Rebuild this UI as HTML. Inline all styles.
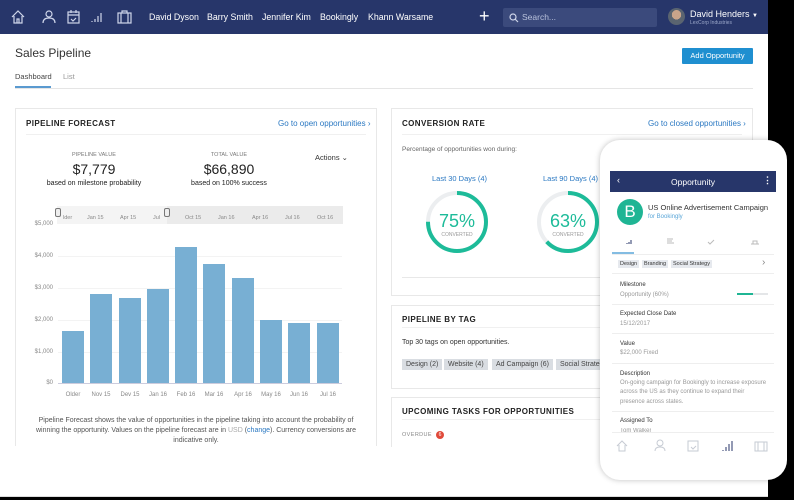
<!DOCTYPE html>
<html><head><style>
*{margin:0;padding:0;box-sizing:border-box}
body{width:794px;height:500px;background:#000;font-family:"Liberation Sans",sans-serif;position:relative;overflow:hidden;color:#333}
.abs{position:absolute}
#app{left:0;top:0;width:768px;height:497px;background:#fff;overflow:hidden}
#nav{left:0;top:0;width:768px;height:34px;background:#27366a}
.nv{color:#fff;font-size:8.8px;top:12px}
.card{border:1px solid #e8e8e8;background:#fff}
.h{font-size:8px;font-weight:bold;letter-spacing:.4px;color:#222}
.lnk{color:#2a78c2;font-size:8px}
.yl{font-size:6px;color:#888;left:26px;width:27px;text-align:right}
.bar{background:#78afd3;width:22px}
.xl{font-size:6px;color:#888;top:392px;width:30px;text-align:center}
.tag{background:#d9dde2;color:#444;font-size:7px;padding:2px 4px;top:359px}
.pl{font-size:6px;color:#333;left:620px}
.pv{font-size:6px;color:#999;left:620px}
.sep{height:1px;background:#eee;left:612px;width:162px}
</style></head><body>
<div id="app" class="abs">
<div id="nav" class="abs">
<svg class="abs" style="left:10px;top:8px" width="130" height="18" fill="none" stroke="#cfd6ea" stroke-width="1.2">
<path d="M2 9 L8 3 L14 9 M4 8 V15 H12 V8 M7 15 V11 H9 V15"/>
<circle cx="39" cy="6" r="3"/><path d="M33 15 Q33 10 39 10 Q45 10 45 15"/>
<rect x="58" y="4" width="11" height="11"/><path d="M58 7 H69 M61 2 V5 M66 2 V5 M61 11 L63 13 L66 10"/>
<path d="M82 14 V13 M85 14 V11 M88 14 V8 M91 14 V5"/>
<rect x="108" y="5" width="13" height="10"/><path d="M111 5 V15 M118 5 V15 M112 5 V3 H117 V5"/>
</svg>
<div class="abs nv" style="left:149px">David Dyson</div>
<div class="abs nv" style="left:207px">Barry Smith</div>
<div class="abs nv" style="left:262px">Jennifer Kim</div>
<div class="abs nv" style="left:320px">Bookingly</div>
<div class="abs nv" style="left:368px">Khann Warsame</div>
<div class="abs" style="left:479px;top:6px;color:#fff;font-size:18px;font-weight:300">+</div>
<div class="abs" style="left:503px;top:8px;width:154px;height:19px;background:#3b4a7c;border-radius:2px"></div>
<svg class="abs" style="left:509px;top:13px" width="10" height="10" fill="none" stroke="#cfd6ea" stroke-width="1.2"><circle cx="4" cy="4" r="3"/><path d="M6 6 L9 9"/></svg>
<div class="abs" style="left:522px;top:12px;color:#b9c2dc;font-size:8.5px">Search...</div>
<div class="abs" style="left:668px;top:8px;width:17px;height:17px;border-radius:50%;background:radial-gradient(circle at 50% 40%,#c9a48a 0 35%,#5a6470 36%)"></div>
<div class="abs" style="left:690px;top:9px;color:#fff;font-size:9px">David Henders</div>
<div class="abs" style="left:690px;top:20px;color:#9aa6c8;font-size:5px">LexCorp Industries</div>
<div class="abs" style="left:752px;top:13px;color:#fff;font-size:6px">▼</div>
</div>
<div class="abs" style="left:15px;top:46px;font-size:12px;color:#333">Sales Pipeline</div>
<div class="abs" style="left:682px;top:48px;width:71px;height:16px;background:#1f8fd0;color:#fff;font-size:7.5px;text-align:center;line-height:16px;border-radius:1px">Add Opportunity</div>
<div class="abs" style="left:15px;top:72px;font-size:7.5px;color:#444">Dashboard</div>
<div class="abs" style="left:63px;top:72px;font-size:7.5px;color:#999">List</div>
<div class="abs" style="left:15px;top:88px;width:738px;height:1px;background:#e5e5e5"></div>
<div class="abs" style="left:15px;top:86px;width:36px;height:2px;background:#5a9ad0"></div>

<div class="abs card" style="left:15px;top:108px;width:362px;height:345px"></div>
<div class="abs h" style="left:26px;top:119px">PIPELINE FORECAST</div>
<div class="abs lnk" style="left:278px;top:119px">Go to open opportunities ›</div>
<div class="abs" style="left:26px;top:134px;width:340px;height:1px;background:#f0f0f0"></div>
<div class="abs" style="left:44px;top:152px;width:100px;text-align:center;font-size:5.5px;color:#777">PIPELINE VALUE</div>
<div class="abs" style="left:44px;top:161px;width:100px;text-align:center;font-size:14px;color:#222">$7,779</div>
<div class="abs" style="left:34px;top:180px;width:120px;text-align:center;font-size:7px;color:#222">based on milestone probability</div>
<div class="abs" style="left:179px;top:152px;width:100px;text-align:center;font-size:5.5px;color:#777">TOTAL VALUE</div>
<div class="abs" style="left:179px;top:161px;width:100px;text-align:center;font-size:14px;color:#222">$66,890</div>
<div class="abs" style="left:169px;top:180px;width:120px;text-align:center;font-size:7px;color:#222">based on 100% success</div>
<div class="abs" style="left:315px;top:153px;font-size:7.5px;color:#333">Actions ⌄</div>
<div class="abs" style="left:57px;top:206px;width:286px;height:18px;background:#ebebeb"></div>
<div class="abs" style="left:57px;top:206px;width:110px;height:18px;background:#f4f4f4"></div>
<div class="abs" style="left:55px;top:208px;width:6px;height:9px;border:1px solid #777;background:#eee;border-radius:2px"></div>
<div class="abs" style="left:164px;top:208px;width:6px;height:9px;border:1px solid #777;background:#eee;border-radius:2px"></div>
<div class="abs" style="left:63px;top:215px;font-size:5.5px;color:#888">lder</div>
<div class="abs" style="left:87px;top:215px;font-size:5.5px;color:#888">Jan 15</div>
<div class="abs" style="left:120px;top:215px;font-size:5.5px;color:#888">Apr 15</div>
<div class="abs" style="left:153px;top:215px;font-size:5.5px;color:#888">Jul</div>
<div class="abs" style="left:185px;top:215px;font-size:5.5px;color:#888">Oct 15</div>
<div class="abs" style="left:218px;top:215px;font-size:5.5px;color:#888">Jan 16</div>
<div class="abs" style="left:252px;top:215px;font-size:5.5px;color:#888">Apr 16</div>
<div class="abs" style="left:285px;top:215px;font-size:5.5px;color:#888">Jul 16</div>
<div class="abs" style="left:317px;top:215px;font-size:5.5px;color:#888">Oct 16</div>
<div class="abs yl" style="top:221px">$5,000</div>
<div class="abs yl" style="top:253px">$4,000</div>
<div class="abs yl" style="top:285px">$3,000</div>
<div class="abs yl" style="top:317px">$2,000</div>
<div class="abs yl" style="top:349px">$1,000</div>
<div class="abs yl" style="top:380px">$0</div>
<div class="abs" style="left:58px;top:256px;width:284px;height:1px;background:#f3f3f3"></div>
<div class="abs" style="left:58px;top:288px;width:284px;height:1px;background:#f3f3f3"></div>
<div class="abs" style="left:58px;top:320px;width:284px;height:1px;background:#f3f3f3"></div>
<div class="abs" style="left:58px;top:352px;width:284px;height:1px;background:#f3f3f3"></div>
<div class="abs" style="left:58px;top:383px;width:284px;height:1px;background:#ccd"></div>
<div class="abs bar" style="left:62px;top:331px;height:52px"></div>
<div class="abs bar" style="left:90px;top:294px;height:89px"></div>
<div class="abs bar" style="left:119px;top:298px;height:85px"></div>
<div class="abs bar" style="left:147px;top:289px;height:94px"></div>
<div class="abs bar" style="left:175px;top:247px;height:136px"></div>
<div class="abs bar" style="left:203px;top:264px;height:119px"></div>
<div class="abs bar" style="left:232px;top:278px;height:105px"></div>
<div class="abs bar" style="left:260px;top:320px;height:63px"></div>
<div class="abs bar" style="left:288px;top:323px;height:60px"></div>
<div class="abs bar" style="left:317px;top:323px;height:60px"></div>
<div class="abs xl" style="left:58px">Older</div><div class="abs xl" style="left:86px">Nov 15</div><div class="abs xl" style="left:115px">Dev 15</div><div class="abs xl" style="left:143px">Jan 16</div><div class="abs xl" style="left:171px">Feb 16</div><div class="abs xl" style="left:199px">Mar 16</div><div class="abs xl" style="left:228px">Apr 16</div><div class="abs xl" style="left:256px">May 16</div><div class="abs xl" style="left:284px">Jun 16</div><div class="abs xl" style="left:313px">Jul 16</div>
<div class="abs" style="left:36px;top:416px;width:320px;text-align:center;font-size:7px;line-height:10px;color:#555">Pipeline Forecast shows the value of opportunities in the pipeline taking into account the probability of winning the opportunity. Values on the pipeline forecast are in <span style="color:#aaa">USD</span> (<span style="color:#2a78c2">change</span>). Currency conversions are indicative only.</div>
<div class="abs" style="left:15px;top:446px;width:362px;height:60px;background:#fff"></div>

<div class="abs card" style="left:391px;top:108px;width:362px;height:188px"></div>
<div class="abs h" style="left:402px;top:119px">CONVERSION RATE</div>
<div class="abs lnk" style="left:648px;top:119px">Go to closed opportunities ›</div>
<div class="abs" style="left:402px;top:134px;width:340px;height:1px;background:#f0f0f0"></div>
<div class="abs" style="left:402px;top:146px;font-size:6.5px;color:#666">Percentage of opportunities won during:</div>
<div class="abs lnk" style="left:432px;top:174px;font-size:7.5px">Last 30 Days (4)</div>
<div class="abs lnk" style="left:543px;top:174px;font-size:7.5px">Last 90 Days (4)</div>
<svg class="abs" style="left:420px;top:188px" width="200" height="70">
<circle cx="37" cy="34" r="29" fill="none" stroke="#eceef0" stroke-width="4"/>
<circle cx="37" cy="34" r="29" fill="none" stroke="#1dbb99" stroke-width="4" stroke-dasharray="136.7 182.2" transform="rotate(-90 37 34)"/>
<circle cx="148" cy="34" r="29" fill="none" stroke="#eceef0" stroke-width="4"/>
<circle cx="148" cy="34" r="29" fill="none" stroke="#1dbb99" stroke-width="4" stroke-dasharray="114.8 182.2" transform="rotate(-90 148 34)"/>
<text x="37" y="39" font-size="18" fill="#1dbb99" text-anchor="middle" font-family="Liberation Sans">75%</text>
<text x="37" y="48" font-size="5" fill="#999" text-anchor="middle" font-family="Liberation Sans">CONVERTED</text>
<text x="148" y="39" font-size="18" fill="#1dbb99" text-anchor="middle" font-family="Liberation Sans">63%</text>
<text x="148" y="48" font-size="5" fill="#999" text-anchor="middle" font-family="Liberation Sans">CONVERTED</text>
</svg>
<div class="abs" style="left:402px;top:277px;width:340px;height:1px;background:#e8e8e8"></div>

<div class="abs card" style="left:391px;top:305px;width:362px;height:84px"></div>
<div class="abs h" style="left:402px;top:315px">PIPELINE BY TAG</div>
<div class="abs" style="left:402px;top:327px;width:340px;height:1px;background:#f0f0f0"></div>
<div class="abs" style="left:402px;top:339px;font-size:7px;color:#333">Top 30 tags on open opportunities.</div>
<div class="abs tag" style="left:402px">Design (2)</div>
<div class="abs tag" style="left:444px">Website (4)</div>
<div class="abs tag" style="left:492px">Ad Campaign (6)</div>
<div class="abs tag" style="left:556px">Social Strategy</div>

<div class="abs card" style="left:391px;top:397px;width:362px;height:60px"></div>
<div class="abs h" style="left:402px;top:407px">UPCOMING TASKS FOR OPPORTUNITIES</div>
<div class="abs" style="left:402px;top:419px;width:340px;height:1px;background:#f0f0f0"></div>
<div class="abs" style="left:402px;top:432px;font-size:5.5px;color:#888;letter-spacing:.4px">OVERDUE</div>
<div class="abs" style="left:436px;top:431px;width:8px;height:8px;border-radius:50%;background:#e04a3a;color:#fff;font-size:5px;text-align:center;line-height:8px">6</div>
<div class="abs" style="left:391px;top:447px;width:377px;height:60px;background:#fff"></div>
<div class="abs" style="left:0;top:496px;width:768px;height:1px;background:#ddd"></div>
</div>

<div class="abs" style="left:600px;top:140px;width:187px;height:340px;background:#fff;border-radius:20px;box-shadow:0 0 6px rgba(0,0,0,.25)"></div>
<div class="abs" style="left:610px;top:171px;width:166px;height:21px;background:#27366a"></div>
<div class="abs" style="left:617px;top:175px;color:#fff;font-size:9px">‹</div>
<div class="abs" style="left:610px;top:177px;width:166px;text-align:center;color:#fff;font-size:8.5px">Opportunity</div>
<div class="abs" style="left:763px;top:175px;color:#fff;font-size:9px;font-weight:bold">⋮</div>
<div class="abs" style="left:617px;top:199px;width:26px;height:26px;border-radius:50%;background:#1fb594;color:#fff;font-size:17px;text-align:center;line-height:26px">B</div>
<div class="abs" style="left:648px;top:203px;font-size:7.5px;color:#333">US Online Advertisement Campaign</div>
<div class="abs" style="left:648px;top:214px;font-size:6px;color:#5aa6d8">for Bookingly</div>
<svg class="abs" style="left:610px;top:234px" width="166" height="20" fill="none" stroke="#bbb" stroke-width="1">
<path d="M17 10 V9 M19 10 V8 M21 10 V6" stroke="#27366a"/>
<path d="M57 5 H63 M57 7 H62 M57 9 H64"/><path d="M98 8 L100 10 L104 6"/><path d="M141 10 H149 M143 10 V7 H147 V10"/>
<path d="M2 19 H24" stroke="#5aa6d8" stroke-width="1.5"/>
</svg>
<div class="abs" style="left:612px;top:254px;width:162px;height:1px;background:#eee"></div>
<div class="abs" style="left:618px;top:260px;font-size:5.5px;background:#e6e9ee;padding:1px 2px;color:#333">Design</div>
<div class="abs" style="left:642px;top:260px;font-size:5.5px;background:#e6e9ee;padding:1px 2px;color:#333">Branding</div>
<div class="abs" style="left:671px;top:260px;font-size:5.5px;background:#e6e9ee;padding:1px 2px;color:#333">Social Strategy</div>
<div class="abs" style="left:762px;top:257px;font-size:10px;color:#888">›</div>
<div class="abs sep" style="top:273px"></div>
<div class="abs pl" style="top:282px">Milestone</div>
<div class="abs pv" style="top:292px">Opportunity (60%)</div>
<div class="abs" style="left:737px;top:293px;width:31px;height:2px;background:#e4e6e8"></div>
<div class="abs" style="left:737px;top:293px;width:16px;height:2px;background:#1fb594"></div>
<div class="abs sep" style="top:304px"></div>
<div class="abs pl" style="top:311px">Expected Close Date</div>
<div class="abs pv" style="top:321px">15/12/2017</div>
<div class="abs sep" style="top:333px"></div>
<div class="abs pl" style="top:341px">Value</div>
<div class="abs pv" style="top:350px">$22,000 Fixed</div>
<div class="abs sep" style="top:363px"></div>
<div class="abs pl" style="top:371px">Description</div>
<div class="abs pv" style="top:379px;width:150px;line-height:9.3px">On-going campaign for Bookingly to increase exposure across the US as they continue to expand their presence across states.</div>
<div class="abs sep" style="top:411px"></div>
<div class="abs pl" style="top:418px">Assigned To</div>
<div class="abs pv" style="top:428px;height:4px;overflow:hidden">Tom Walker</div>
<div class="abs sep" style="top:432px"></div>
<svg class="abs" style="left:610px;top:437px" width="166" height="18" fill="none" stroke="#c6cbd3" stroke-width="1">
<path d="M7 9 L12 4 L17 9 M9 8 V14 H15 V8"/>
<circle cx="50" cy="6" r="3"/><path d="M45 14 Q45 10 50 10 Q55 10 55 14"/>
<rect x="78" y="4" width="10" height="10"/><path d="M81 10 L83 12 L86 9"/>
<path d="M113 14 V13 M116 14 V10 M119 14 V7 M122 14 V4" stroke="#27366a"/>
<rect x="145" y="5" width="12" height="9"/><path d="M148 5 V14 M154 5 V14"/>
</svg>
</body></html>
